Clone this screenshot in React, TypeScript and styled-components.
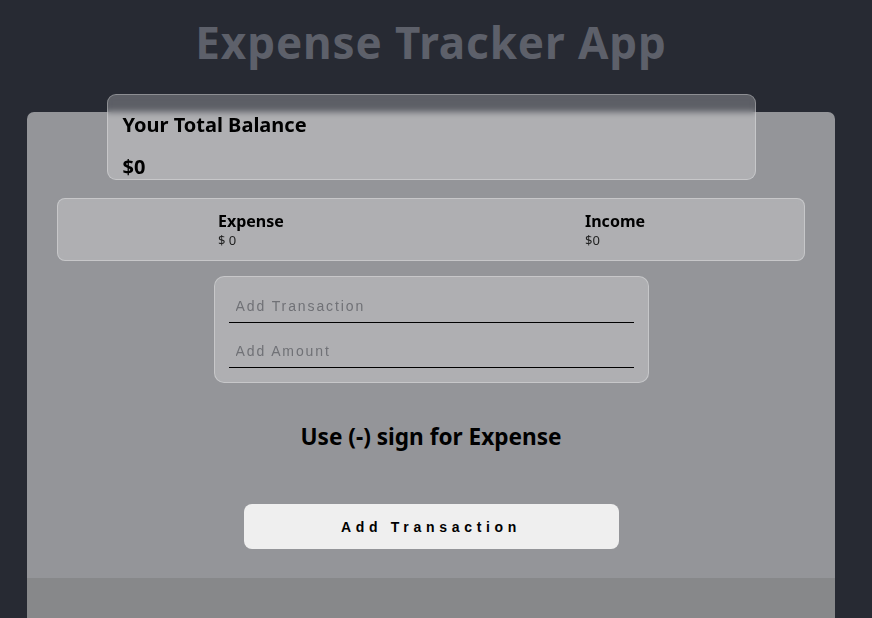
import React from "react";
import styled, { createGlobalStyle } from "styled-components";

const Global = createGlobalStyle`
  html, body { margin: 0; padding: 0; background: #272a33; }
  body { font-family: "Noto Sans", "Open Sans", sans-serif; }
  * { box-sizing: border-box; }
`;

const Page = styled.div`
  width: 862px;
  min-height: 618px;
  display: flex;
  flex-direction: column;
  align-items: center;
`;

const Title = styled.h1`
  margin: 15px 0 0;
  height: 54px;
  font-size: 44px;
  line-height: 54px;
  font-weight: 700;
  color: #5d606a;
  letter-spacing: 0.9px;
`;

const Main = styled.div`
  margin-top: 43px;
  width: 808px;
  background: #949599;
  border-radius: 7px 7px 0 0;
  display: flex;
  flex-direction: column;
  align-items: center;
`;

const Glass = styled.div`
  background: rgba(255, 255, 255, 0.25);
  border: 1px solid rgba(255, 255, 255, 0.3);
  backdrop-filter: blur(3px);
  color: #000;
`;

const BalanceCard = styled(Glass)`
  margin-top: -18px;
  width: 649px;
  height: 86px;
  border-radius: 9px;
  padding: 18px 15px 0;
  display: flex;
  flex-direction: column;
  gap: 18px;
`;

const BalanceText = styled.div`
  font-size: 20px;
  font-weight: 700;
  line-height: 24px;
`;

const SummaryCard = styled(Glass)`
  margin-top: 18px;
  width: 748px;
  height: 63px;
  border-radius: 8px;
  display: grid;
  grid-template-columns: 1fr 1fr;
  align-items: center;
`;

const SummaryItem = styled.div<{ $left: number }>`
  padding-left: ${(p) => p.$left}px;
  display: flex;
  flex-direction: column;
`;

const SummaryLabel = styled.div`
  font-size: 16px;
  font-weight: 700;
  line-height: 20px;
`;

const SummaryValue = styled.div`
  font-size: 13px;
  line-height: 18px;
  color: #222;
`;

const FormCard = styled(Glass)`
  margin-top: 15px;
  width: 435px;
  height: 107px;
  border-radius: 10px;
  padding: 14px 14px 0;
  display: flex;
  flex-direction: column;
`;

const Input = styled.input`
  width: 405px;
  height: 32px;
  margin-bottom: 13px;
  border: none;
  border-bottom: 1px solid #000;
  background: transparent;
  outline: none;
  padding: 0 7px 2px;
  font-family: "Liberation Sans", Arial, sans-serif;
  font-size: 14px;
  letter-spacing: 1.9px;
  color: #000;
  &::placeholder { color: #707176; }
`;

const Hint = styled.h2`
  margin: 39px 0 0;
  font-size: 22.6px;
  line-height: 30px;
  font-weight: 700;
  color: #000;
`;

const Button = styled.button`
  margin-top: 52px;
  width: 375px;
  height: 45px;
  border: none;
  border-radius: 8px;
  background: #efefef;
  font-family: "Liberation Sans", Arial, sans-serif;
  font-size: 14px;
  font-weight: 700;
  letter-spacing: 4.7px;
  color: #000;
  cursor: pointer;
`;

const Footer = styled.div`
  margin-top: 29px;
  width: 100%;
  height: 40px;
  background: #87888a;
`;

export default function App() {
  return (
    <>
      <Global />
      <Page>
        <Title>Expense Tracker App</Title>
        <Main>
          <BalanceCard>
            <BalanceText>Your Total Balance</BalanceText>
            <BalanceText>$0</BalanceText>
          </BalanceCard>
          <SummaryCard>
            <SummaryItem $left={160}>
              <SummaryLabel>Expense</SummaryLabel>
              <SummaryValue>$ 0</SummaryValue>
            </SummaryItem>
            <SummaryItem $left={154}>
              <SummaryLabel>Income</SummaryLabel>
              <SummaryValue>$0</SummaryValue>
            </SummaryItem>
          </SummaryCard>
          <FormCard>
            <Input placeholder="Add Transaction" />
            <Input placeholder="Add Amount" />
          </FormCard>
          <Hint>Use (-) sign for Expense</Hint>
          <Button>Add Transaction</Button>
          <Footer />
        </Main>
      </Page>
    </>
  );
}
